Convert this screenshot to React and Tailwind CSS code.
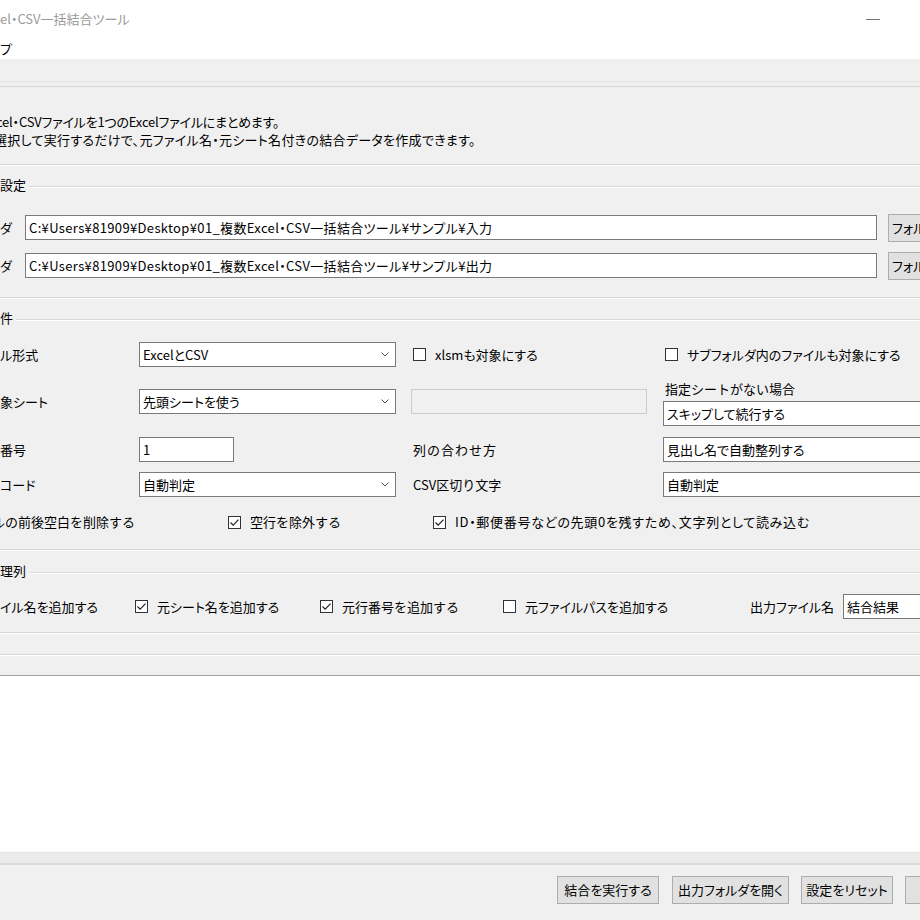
import React from "react";

// Meiryo-like widths: proportional kana by default, full-width where the
// reference text runs wider.
const NP = "[font-feature-settings:normal]";

const Sep = ({ className = "" }) => (
  <div className={`h-[2px] border-t border-[#d5d5d5] bg-white ${className}`} />
);

const GroupHead = ({ children, className = "" }) => (
  <div className={`flex h-[18px] ${className}`}>
    <span className="leading-[18px] pr-[3px] whitespace-nowrap">{children}</span>
    <div className="flex-1 mt-[10px] h-[2px] border-t border-[#d9d9d9] bg-white" />
  </div>
);

const Entry = ({ value, className = "" }) => (
  <div className={`h-[25px] shrink-0 border border-[#7a7a7a] bg-white flex items-center pl-[3px] whitespace-nowrap overflow-hidden ${className}`}>
    {value}
  </div>
);

const Combo = ({ value, className = "" }) => (
  <div className={`h-[25px] shrink-0 border border-[#7a7a7a] bg-white flex items-center pl-[3px] whitespace-nowrap ${className}`}>
    <span className="flex-1">{value}</span>
    <svg width="8" height="5" viewBox="0 0 8 5" className="mr-[6px]">
      <polyline points="0.5,0.5 4,4 7.5,0.5" fill="none" stroke="#555" strokeWidth="1" />
    </svg>
  </div>
);

const Check = ({ on }) => (
  <svg width="13" height="13" viewBox="0 0 13 13" className="shrink-0">
    <rect x="0.5" y="0.5" width="12" height="12" fill="#fff" stroke="#333" />
    {on && <polyline points="2.5,6.5 5.2,9.2 10.5,3.6" fill="none" stroke="#222" strokeWidth="1.2" />}
  </svg>
);

const CheckLabel = ({ on, children, className = "", textClass = "" }) => (
  <div className={`flex items-center shrink-0 ${className}`}>
    <Check on={on} />
    <span className={`ml-[9px] whitespace-nowrap ${textClass}`}>{children}</span>
  </div>
);

const Btn = ({ children, className = "" }) => (
  <div className={`h-[28px] shrink-0 bg-[#e1e1e1] border border-[#adadad] flex items-center justify-center whitespace-nowrap ${className}`}>
    {children}
  </div>
);

export default function App() {
  return (
    <div className="w-[920px] h-[920px] overflow-hidden bg-[#f0f0f0] text-[13px] leading-[18px] text-black font-['Noto_Sans_CJK_JP',sans-serif] [font-feature-settings:'palt']">
      {/* title bar */}
      <div className="h-[38px] bg-white flex items-center justify-between">
        <span className="text-[#9a9a9a]">el・CSV一括結合ツール</span>
        <div className="mr-[40px] w-[14px] h-px bg-[#777]" />
      </div>
      {/* menu */}
      <div className="h-[21px] bg-white flex items-center">
        <span>プ</span>
      </div>

      {/* main frame */}
      <div className="h-[617px] border-b border-[#a0a0a0] flex flex-col">
        <div className="h-[22px]" />
        <div className="h-[6px] border-t border-[#e4e4e4] border-b border-b-[#d3d3d3]" />

        <div className="pt-[26px] pb-[15px] whitespace-nowrap">
          <div className="-ml-[4px] tracking-[-0.2px]">cel・CSVファイルを1つのExcelファイルにまとめます。</div>
          <div className="-ml-[6px] tracking-[0.3px]">選択して実行するだけで、元ファイル名・元シート名付きの結合データを作成できます。</div>
        </div>
        <Sep />

        {/* folder settings */}
        <GroupHead className="mt-[10px]">設定</GroupHead>
        <div className="mt-[21px] flex items-center h-[25px]">
          <span className="w-[25px] shrink-0">ダ</span>
          <Entry className="w-[852px] tracking-[0.35px]" value="C:¥Users¥81909¥Desktop¥01_複数Excel・CSV一括結合ツール¥サンプル¥入力" />
          <Btn className="ml-[11px] h-[27px] w-[90px] !justify-start pl-[3px]">フォルダ選択</Btn>
        </div>
        <div className="mt-[13px] flex items-center h-[25px]">
          <span className="w-[25px] shrink-0">ダ</span>
          <Entry className="w-[852px] tracking-[0.35px]" value="C:¥Users¥81909¥Desktop¥01_複数Excel・CSV一括結合ツール¥サンプル¥出力" />
          <Btn className="ml-[11px] h-[27px] w-[90px] !justify-start pl-[3px]">フォルダ選択</Btn>
        </div>
        <Sep className="mt-[19px]" />

        {/* read options */}
        <GroupHead className="mt-[10px]">件</GroupHead>
        <div className="mt-[15px] flex items-center h-[25px]">
          <span className="w-[139px] shrink-0">ル形式</span>
          <Combo className="w-[257px]" value="ExcelとCSV" />
          <div className="w-[267px] shrink-0 pl-[17px]">
            <CheckLabel>xlsmも対象にする</CheckLabel>
          </div>
          <CheckLabel className="pl-[2px]">サブフォルダ内のファイルも対象にする</CheckLabel>
        </div>
        <div className="mt-[13px] flex items-start">
          <span className="w-[139px] shrink-0 mt-[9px] h-[25px] flex items-center">象シート</span>
          <Combo className="w-[257px] mt-[9px]" value="先頭シートを使う" />
          <div className="w-[267px] shrink-0 pl-[15px] mt-[9px]">
            <div className="w-[236px] h-[25px] border border-[#cccccc] bg-[#f0f0f0]" />
          </div>
          <div className="flex flex-col">
            <span className={`pl-[2px] whitespace-nowrap ${NP}`}>指定シートがない場合</span>
            <Entry className="mt-[3px] w-[300px]" value="スキップして続行する" />
          </div>
        </div>
        <div className="mt-[11px] flex items-center h-[25px]">
          <span className="w-[139px] shrink-0">番号</span>
          <div className="w-[257px] shrink-0">
            <Entry className="w-[95px]" value="1" />
          </div>
          <span className={`w-[267px] shrink-0 pl-[17px] ${NP} tracking-[1px]`}>列の合わせ方</span>
          <Entry className="w-[300px]" value="見出し名で自動整列する" />
        </div>
        <div className="mt-[10px] flex items-center h-[25px]">
          <span className="w-[139px] shrink-0">コード</span>
          <Combo className="w-[257px]" value="自動判定" />
          <span className={`w-[267px] shrink-0 pl-[17px] ${NP}`}>CSV区切り文字</span>
          <Entry className="w-[300px]" value="自動判定" />
        </div>
        <div className="mt-[16px] flex items-center h-[18px]">
          <div className={`w-[228px] shrink-0 whitespace-nowrap ${NP}`}>
            <span className="-ml-[8px]">ルの前後空白を削除する</span>
          </div>
          <div className="w-[205px] shrink-0">
            <CheckLabel on textClass={NP}>空行を除外する</CheckLabel>
          </div>
          <CheckLabel on textClass="tracking-[0.7px]">ID・郵便番号などの先頭0を残すため、文字列として読み込む</CheckLabel>
        </div>
        <Sep className="mt-[18px]" />

        {/* management columns */}
        <GroupHead className="mt-[11px]">理列</GroupHead>
        <div className="mt-[14px] flex items-center h-[25px]">
          <span className="w-[135px] shrink-0 whitespace-nowrap">イル名を追加する</span>
          <div className="w-[185px] shrink-0"><CheckLabel on>元シート名を追加する</CheckLabel></div>
          <div className="w-[183px] shrink-0"><CheckLabel on textClass={NP}>元行番号を追加する</CheckLabel></div>
          <div className="w-[247px] shrink-0"><CheckLabel>元ファイルパスを追加する</CheckLabel></div>
          <span className="w-[93px] shrink-0 whitespace-nowrap">出力ファイル名</span>
          <Entry className="w-[200px]" value="結合結果" />
        </div>
        <Sep className="mt-[13px]" />
        <Sep className="mt-[20px]" />
      </div>

      {/* log area */}
      <div className="h-[176px] bg-white" />

      {/* bottom bar */}
      <div className="h-[11px] bg-[#ebebeb] border-t border-[#e4e4e4]" />
      <div className="h-[2px] bg-[#dadada]" />
      <div className="flex pl-[557px] mt-[11px] gap-[12px]">
        <Btn className="w-[102px]">結合を実行する</Btn>
        <Btn className="w-[117px] ml-[1px]">出力フォルダを開く</Btn>
        <Btn className="w-[92px]">設定をリセット</Btn>
        <Btn className="w-[90px]">閉じる</Btn>
      </div>
    </div>
  );
}
